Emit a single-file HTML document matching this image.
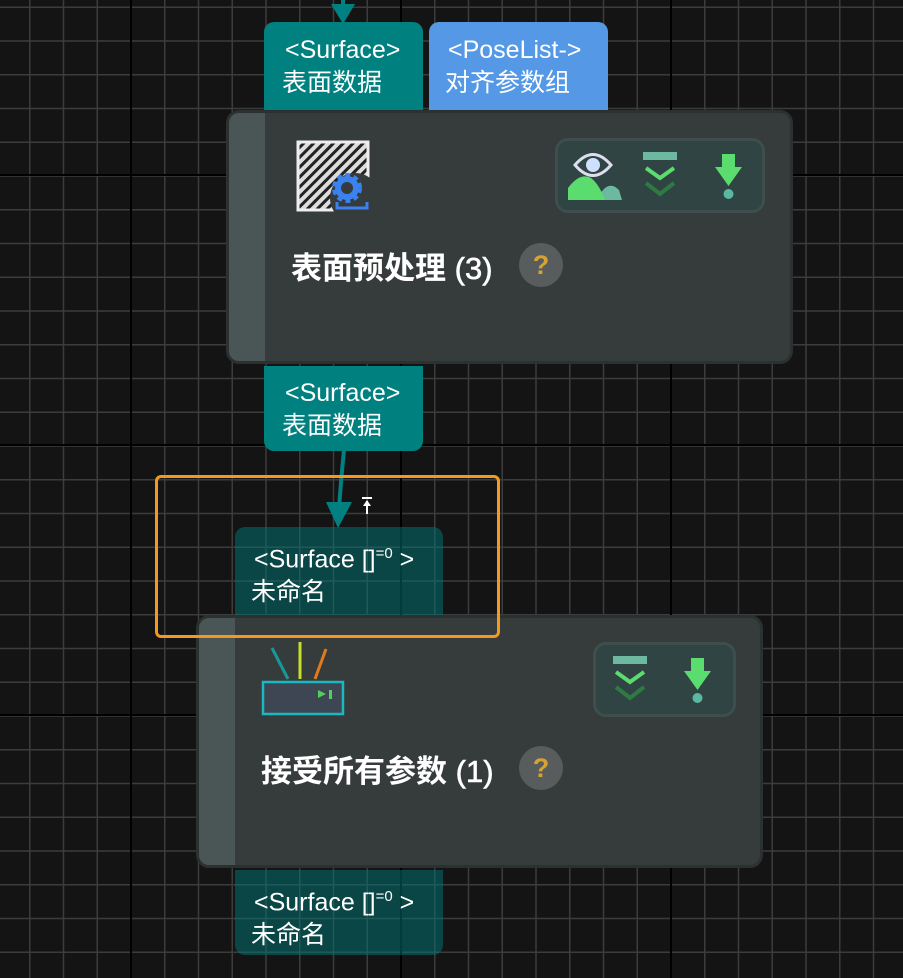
<!DOCTYPE html>
<html><head><meta charset="utf-8"><style>
html,body{margin:0;padding:0}
body{width:903px;height:978px;overflow:hidden;position:relative;background:#141414;font-family:"Liberation Sans","Noto Sans CJK SC",sans-serif;}
.grid{position:absolute;inset:0;
background-image:
linear-gradient(90deg,#000 0,#000 2px,transparent 2px),
linear-gradient(0deg,#000 0,#000 2px,transparent 2px),
linear-gradient(90deg,#3c3c3c 0,#3c3c3c 1.5px,transparent 1.5px),
linear-gradient(0deg,#3c3c3c 0,#3c3c3c 1.5px,transparent 1.5px);
background-size:270px 270px,270px 270px,33.75px 33.75px,33.75px 33.75px;
background-position:130px 0,0 176px,29px 0,0 8px;}
.abs{position:absolute}
.tab{position:absolute;color:#fff;font-size:25px;line-height:33px;box-sizing:border-box;white-space:nowrap}
.node{position:absolute;background:#363b3b;border:3px solid #2b3030;border-radius:13px;box-sizing:border-box;overflow:hidden}
.strip{position:absolute;left:0;top:0;bottom:0;width:36px;background:#4a5655}
.title{position:absolute;color:#fff;font-weight:bold;font-size:31px;white-space:nowrap}
.title span{font-size:31px;font-weight:normal;-webkit-text-stroke:0.6px #fff}
.help{position:absolute;width:44px;height:44px;border-radius:50%;background:#585c5c;color:#d6a332;font-size:27px;font-weight:bold;text-align:center;line-height:44px}
.bg{position:absolute;background:#304443;border:3px solid #3e4e4d;border-radius:13px;box-sizing:border-box}
sup{font-size:15px}
</style></head><body>
<div class="grid"></div>

<svg class="abs" style="left:325px;top:0" width="40" height="25"><line x1="18" y1="0" x2="18" y2="10" stroke="#008080" stroke-width="4"/><polygon points="6,4 30,4 18,24" fill="#008080"/></svg>

<div class="tab" style="left:264px;top:22px;width:159px;height:88px;background:#018080;border-radius:10px 10px 0 0;padding:12px 0 0 18px"><div style="padding-left:3px">&lt;Surface&gt;</div>表面数据</div>
<div class="tab" style="left:429px;top:22px;width:179px;height:88px;background:#5599e6;border-radius:10px 10px 0 0;padding:12px 0 0 16px"><div style="padding-left:3px">&lt;PoseList-&gt;</div>对齐参数组</div>

<div class="node" style="left:226px;top:110px;width:567px;height:254px"><div class="strip"></div></div>
<svg class="abs" style="left:295px;top:140px" width="80" height="75">
<defs><pattern id="h" width="7" height="7" patternUnits="userSpaceOnUse" patternTransform="rotate(45)"><rect width="7" height="7" fill="#ddd"/><rect width="3" height="7" fill="#222"/></pattern></defs>
<rect x="3" y="2" width="70" height="68" fill="url(#h)" stroke="#eee" stroke-width="3"/>
<circle cx="60" cy="58" r="25" fill="#363b3b"/>
<circle cx="52" cy="48" r="12" fill="none" stroke="#3a82f0" stroke-width="6" stroke-dasharray="4.5 3.3"/>
<circle cx="52" cy="48" r="9" fill="none" stroke="#3a82f0" stroke-width="6"/>
<path d="M42 62 V68 H72 V62" fill="none" stroke="#3a82f0" stroke-width="3"/>
</svg>
<div class="bg" style="left:555px;top:138px;width:210px;height:75px"></div>
<svg class="abs" style="left:555px;top:138px" width="210" height="75">
<path d="M20 27 Q38 6 56 27 Q38 48 20 27Z" fill="none" stroke="#dde" stroke-width="3"/><circle cx="38" cy="27" r="7" fill="#cfe0ff"/>
<path d="M42 62 Q52 40 64 52 L67 62Z" fill="#6cb8a0"/>
<path d="M13 62 L13 50 Q25 34 36 40 Q44 46 50 62Z" fill="#5bdc6e"/>
<rect x="88" y="14" width="34" height="8" fill="#6cb8a0"/>
<path d="M91 30 L105 40 L119 30" fill="none" stroke="#5bdc6e" stroke-width="4"/>
<path d="M91 45 L105 56 L119 45" fill="none" stroke="#2e7a45" stroke-width="4"/>
<path d="M167 16 H180 V29 H187 L173.5 48 L160 29 H167Z" fill="#5bdc6e"/>
<circle cx="173.5" cy="56" r="5" fill="#5ab8a0"/>
</svg>
<div class="title" style="left:291px;top:243px">表面预处理 <span>(3)</span></div>
<div class="help" style="left:519px;top:243px">?</div>

<div class="tab" style="left:264px;top:366px;width:159px;height:85px;background:#018080;border-radius:0 0 10px 10px;padding:11px 0 0 18px"><div style="padding-left:3px">&lt;Surface&gt;</div>表面数据</div>

<svg class="abs" style="left:320px;top:450px" width="40" height="80"><path d="M24 0 Q21 30 19 58" fill="none" stroke="#008080" stroke-width="4"/><polygon points="6,52 32,52 18,78" fill="#008080"/></svg>
<svg class="abs" style="left:361px;top:496px" width="12" height="20"><line x1="1" y1="2" x2="11" y2="2" stroke="#fff" stroke-width="2"/><line x1="6" y1="5" x2="6" y2="18" stroke="#fff" stroke-width="2"/><polygon points="2,10 6,4 10,10" fill="#fff"/></svg>

<div class="tab" style="left:235px;top:527px;width:208px;height:88px;background:rgba(0,120,120,0.5);border-radius:10px 10px 0 0;padding:10px 0 0 16px"><div style="padding-left:3px">&lt;Surface []<sup>=0</sup> &gt;</div>未命名</div>

<div class="node" style="left:196px;top:615px;width:567px;height:253px"><div class="strip"></div></div>
<svg class="abs" style="left:258px;top:638px" width="90" height="80">
<line x1="14" y1="10" x2="30" y2="41" stroke="#17999a" stroke-width="3"/>
<line x1="42" y1="4" x2="42" y2="41" stroke="#c6e02a" stroke-width="3"/>
<line x1="68" y1="11" x2="57" y2="41" stroke="#e07a20" stroke-width="3"/>
<rect x="5" y="44" width="80" height="32" fill="#3d4652" stroke="#1ab8c0" stroke-width="2.5"/>
<polygon points="60,52 68,56 60,60" fill="#4fcf5e"/><rect x="71" y="52" width="3" height="9" fill="#4fcf5e"/>
</svg>
<div class="bg" style="left:593px;top:642px;width:143px;height:75px"></div>
<svg class="abs" style="left:593px;top:642px" width="143" height="75">
<rect x="20" y="14" width="34" height="8" fill="#6cb8a0"/>
<path d="M23 30 L37 40 L51 30" fill="none" stroke="#5bdc6e" stroke-width="4"/>
<path d="M23 45 L37 56 L51 45" fill="none" stroke="#2e7a45" stroke-width="4"/>
<path d="M98 16 H111 V29 H118 L104.5 48 L91 29 H98Z" fill="#5bdc6e"/>
<circle cx="104.5" cy="56" r="5" fill="#5ab8a0"/>
</svg>
<div class="title" style="left:261px;top:746px">接受所有参数 <span>(1)</span></div>
<div class="help" style="left:519px;top:746px">?</div>

<div class="tab" style="left:235px;top:870px;width:208px;height:85px;background:rgba(0,120,120,0.5);border-radius:0 0 10px 10px;padding:10px 0 0 16px"><div style="padding-left:3px">&lt;Surface []<sup>=0</sup> &gt;</div>未命名</div>

<div class="abs" style="left:155px;top:475px;width:345px;height:163px;border:3px solid #f39a1e;border-radius:6px;box-sizing:border-box"></div>
</body></html>
